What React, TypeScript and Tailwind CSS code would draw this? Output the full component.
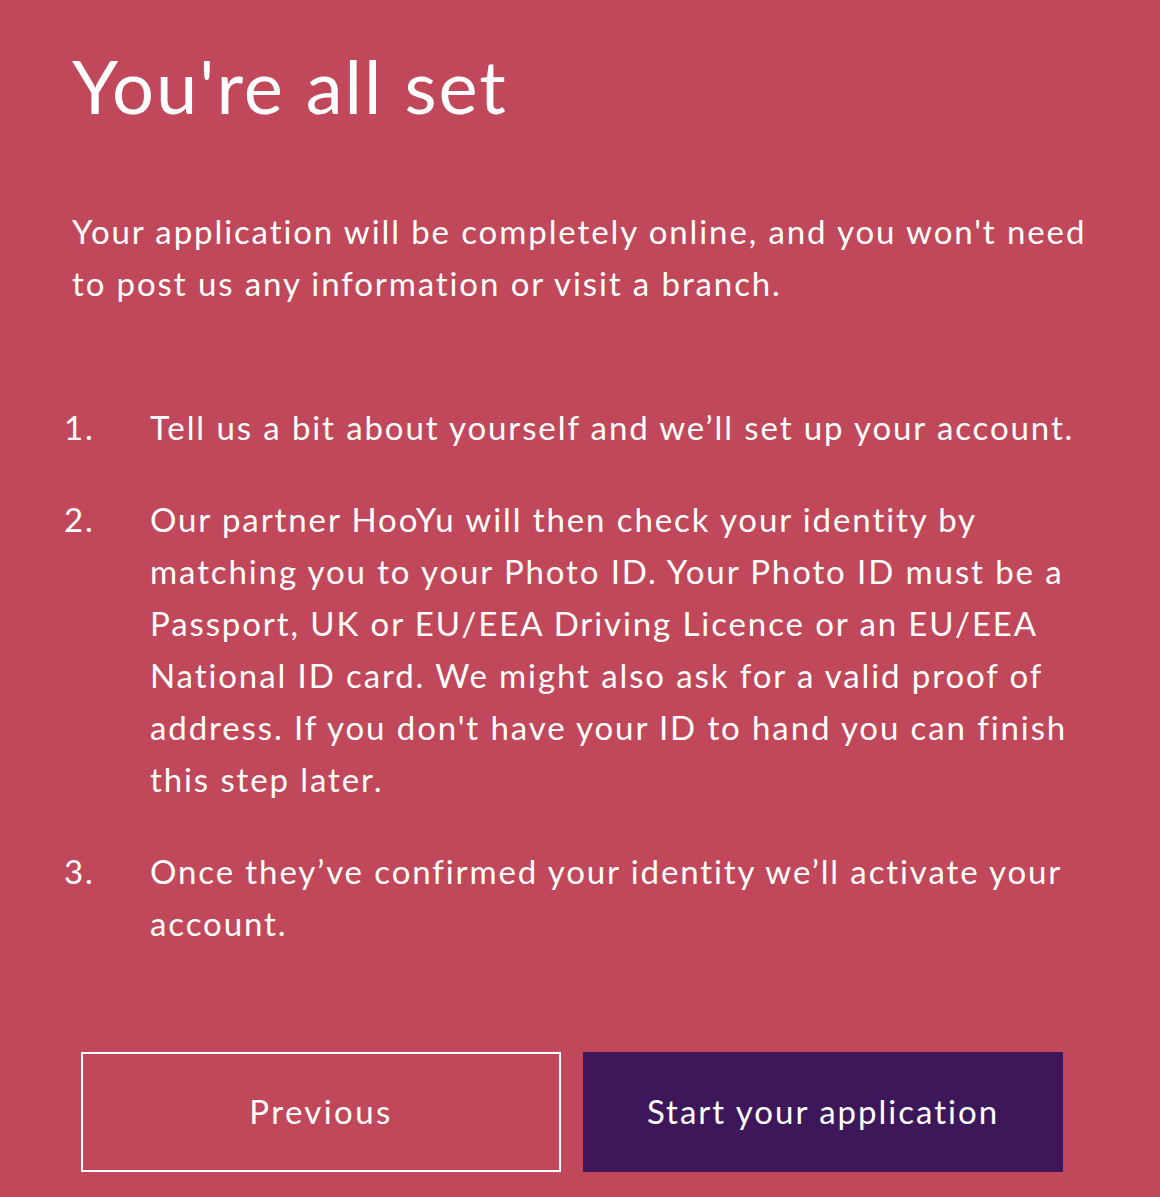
const steps: string[][] = [
  ['Tell us a bit about yourself and we’ll set up your account.'],
  [
    'Our partner HooYu will then check your identity by',
    'matching you to your Photo ID. Your Photo ID must be a',
    'Passport, UK or EU/EEA Driving Licence or an EU/EEA',
    "National ID card. We might also ask for a valid proof of",
    "address. If you don't have your ID to hand you can finish",
    'this step later.',
  ],
  ['Once they’ve confirmed your identity we’ll activate your', 'account.'],
];

export default function App() {
  return (
    <div className="min-h-[1197px] w-[1160px] overflow-hidden bg-[#c0485a] text-white [font-family:Lato,'Noto_Sans',sans-serif]">
      <div className="pl-[72px] pt-[40px]">
        <h1 className="text-[74px] font-normal leading-[92px] tracking-[2px]">You're all set</h1>

        <p className="mt-[73px] whitespace-nowrap text-[33px] leading-[52px] tracking-[1.9px]">
          Your application will be completely online, and you won't need
          <br />
          to post us any information or visit a branch.
        </p>
      </div>

      <ol className="mt-[92px] flex flex-col gap-[40px] pl-[64px]">
        {steps.map((lines, i) => (
          <li key={i} className="flex whitespace-nowrap text-[33px] leading-[52px] tracking-[1.9px]">
            <span className="w-[86px] shrink-0">{i + 1}.</span>
            <span>
              {lines.map((l, j) => (
                <span key={j} className="block">
                  {l}
                </span>
              ))}
            </span>
          </li>
        ))}
      </ol>

      <div className="mt-[103px] flex gap-[22px] pl-[81px]">
        <button className="flex h-[120px] w-[480px] items-center justify-center border-2 border-white text-[33px] tracking-[2.4px]">
          Previous
        </button>
        <button className="flex h-[120px] w-[480px] items-center justify-center bg-[#3d175a] text-[33px] tracking-[2px]">
          Start your application
        </button>
      </div>
    </div>
  );
}
